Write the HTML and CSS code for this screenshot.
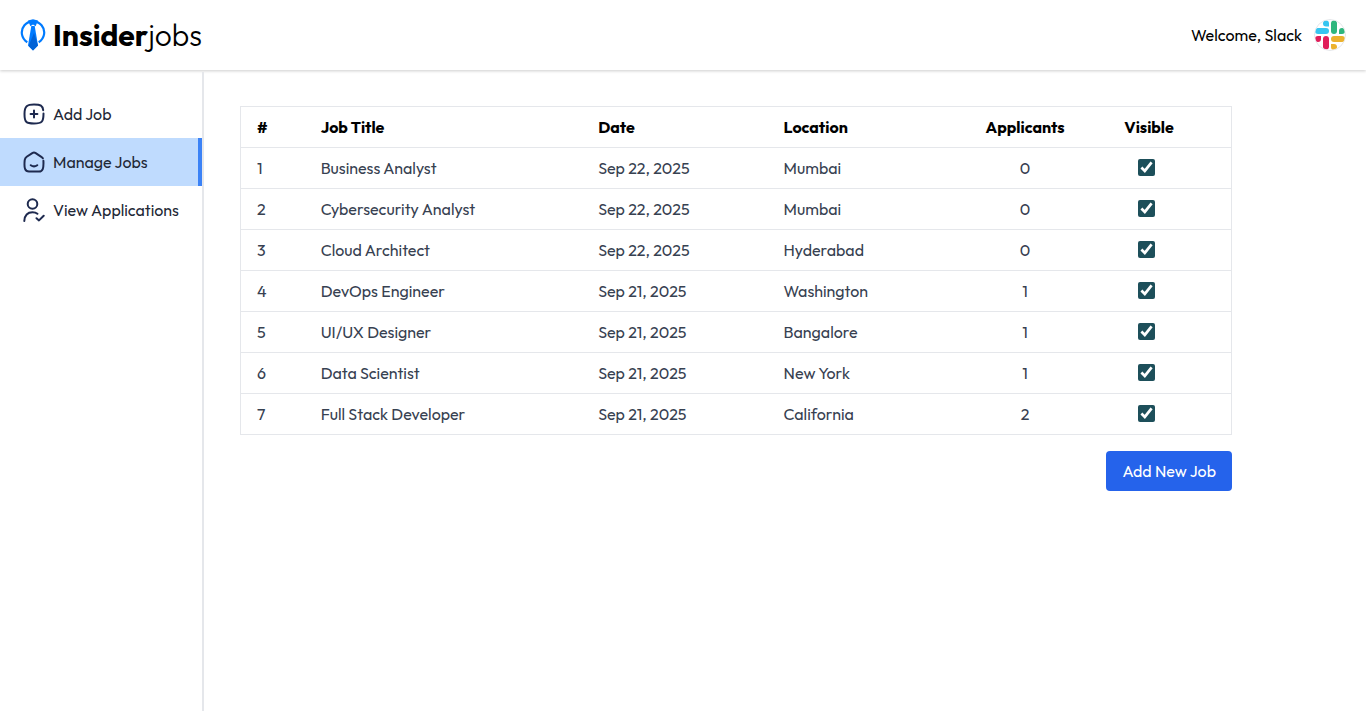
FILE: index.html
```html
<!DOCTYPE html>
<html lang="en">
<head>
<meta charset="utf-8">
<meta name="viewport" content="width=device-width, initial-scale=1">
<title>Insiderjobs - Manage Jobs</title>
<link rel="stylesheet" href="styles.css">
</head>
<body>
<header class="navbar">
  <a class="brand" href="#">
    <svg class="brand-mark" viewBox="0 0 26 32" aria-hidden="true">
      <path d="M7.3 23.2A11.2 11.2 0 1 1 18.7 23.2" fill="none" stroke="#007bff" stroke-width="2.2"/>
      <path d="M8 1.5L13 .3l5 1.2-2.4 5.8L13 5.6l-2.6 1.7z" fill="#007bff"/>
      <path d="M11.3 7h3.4L18 26.5 13 31.5 8 26.5z" fill="#007bff"/>
      <path d="M14 14l4 12.5-5 5-4.5-4.5z" fill="#0062d6"/>
    </svg>
    <span class="brand-name"><strong>Insider</strong><span class="brand-light">jobs</span></span>
  </a>
  <div class="account">
    <span>Welcome, Slack</span>
    <svg class="avatar" viewBox="0 0 32 32" role="img" aria-label="Slack">
      <defs><clipPath id="round"><circle cx="16" cy="16" r="15"/></clipPath></defs>
      <circle cx="16" cy="16" r="15.5" fill="#fff" stroke="#e5e7eb"/>
      <g clip-path="url(#round)">
        <path d="M12 1.5a3 3 0 0 1 3 3v3h-3a3 3 0 0 1 0-6z" fill="#36c5f0"/>
        <rect x="1" y="9" width="14" height="6" rx="3" fill="#36c5f0"/>
        <rect x="17" y="1.5" width="6" height="13.5" rx="3" fill="#2eb67d"/>
        <path d="M25 15v-3a3 3 0 1 1 3 3z" fill="#2eb67d"/>
        <rect x="17" y="17" width="14" height="6" rx="3" fill="#ecb22e"/>
        <path d="M17 25h3a3 3 0 1 1-3 3z" fill="#ecb22e"/>
        <rect x="9" y="17" width="6" height="13.5" rx="3" fill="#e01e5a"/>
        <path d="M7 17v3a3 3 0 1 1-3-3z" fill="#e01e5a"/>
      </g>
    </svg>
  </div>
</header>
<div class="layout">
  <nav class="sidebar">
    <a class="nav-item" href="#">
      <svg class="nav-icon" viewBox="0 0 22 22" aria-hidden="true"><path d="M20.2 7.2C19.7 2.6 17.8 1.5 11 1.5S1.5 3 1.5 11 3 20.5 11 20.5 20.5 19 20.5 10.4M11 7.6v6.8M7.6 11h6.8"/></svg>
      <span>Add Job</span>
    </a>
    <a class="nav-item active" href="#" aria-current="page">
      <svg class="nav-icon" viewBox="0 0 22 22" aria-hidden="true"><path d="M20.4 9.8c.4 7.7-.7 10.7-4.4 10.7H6c-4 0-5.1-3-4.3-11.4.2-1.7.7-2.4 2-3.3L9.300 2.100c1.200-.8 2.200-.8 3.400 0l5.600 3.700c.7.500 1.200.9 1.500 1.500M7.800 14.200c1.900 1.400 4.500 1.400 6.400 0"/></svg>
      <span>Manage Jobs</span>
    </a>
    <a class="nav-item" href="#">
      <svg class="nav-icon tall" viewBox="0 0 22 24" aria-hidden="true"><circle cx="9.500" cy="6" r="4.800"/><path d="M1.300 23c.4-5.600 3.500-8.700 8.200-8.700 2 0 3.700.5 4.900 1.500M13.500 20.200l2.500 2.200 4.700-4.700"/></svg>
      <span>View Applications</span>
    </a>
  </nav>
  <main class="content">
    <table class="jobs">
      <colgroup><col class="c-num"><col class="c-title"><col class="c-date"><col class="c-place"><col class="c-count"><col class="c-visible"></colgroup>
      <thead>
        <tr><th scope="col">#</th><th scope="col">Job Title</th><th scope="col">Date</th><th scope="col">Location</th><th scope="col" class="center">Applicants</th><th scope="col">Visible</th></tr>
      </thead>
      <tbody>
        <tr><td>1</td><td>Business Analyst</td><td>Sep 22, 2025</td><td>Mumbai</td><td class="center">0</td><td><input class="tick" type="checkbox" aria-label="Business Analyst visible" checked></td></tr>
        <tr><td>2</td><td>Cybersecurity Analyst</td><td>Sep 22, 2025</td><td>Mumbai</td><td class="center">0</td><td><input class="tick" type="checkbox" aria-label="Cybersecurity Analyst visible" checked></td></tr>
        <tr><td>3</td><td>Cloud Architect</td><td>Sep 22, 2025</td><td>Hyderabad</td><td class="center">0</td><td><input class="tick" type="checkbox" aria-label="Cloud Architect visible" checked></td></tr>
        <tr><td>4</td><td>DevOps Engineer</td><td>Sep 21, 2025</td><td>Washington</td><td class="center">1</td><td><input class="tick" type="checkbox" aria-label="DevOps Engineer visible" checked></td></tr>
        <tr><td>5</td><td>UI/UX Designer</td><td>Sep 21, 2025</td><td>Bangalore</td><td class="center">1</td><td><input class="tick" type="checkbox" aria-label="UI/UX Designer visible" checked></td></tr>
        <tr><td>6</td><td>Data Scientist</td><td>Sep 21, 2025</td><td>New York</td><td class="center">1</td><td><input class="tick" type="checkbox" aria-label="Data Scientist visible" checked></td></tr>
        <tr><td>7</td><td>Full Stack Developer</td><td>Sep 21, 2025</td><td>California</td><td class="center">2</td><td><input class="tick" type="checkbox" aria-label="Full Stack Developer visible" checked></td></tr>
      </tbody>
    </table>
    <div class="actions"><button class="add-job" type="button">Add New Job</button></div>
  </main>
</div>
</body>
</html>
```

FILE: styles.css
```css
* {
  box-sizing: border-box;
}

body {
  margin: 0;
  min-height: 100vh;
  display: flex;
  flex-direction: column;
  background: #fff;
  color: #000;
  font: 16px/24px Outfit, Lato, sans-serif;
}

a {
  color: inherit;
  text-decoration: none;
}

.navbar {
  display: flex;
  align-items: center;
  justify-content: space-between;
  padding: 19px 20px;
  box-shadow: 0 1px 3px rgba(0, 0, 0, 0.2);
}

.brand {
  display: flex;
  align-items: center;
  gap: 7px;
}

.brand-mark {
  width: 26px;
  height: 32px;
}

.brand-name {
  font-size: 30px;
  line-height: 32px;
}

.brand-name strong {
  font-weight: 700;
}

.brand-light {
  font-weight: 300;
}

.account {
  display: flex;
  align-items: center;
  gap: 12px;
}

.avatar {
  width: 32px;
  height: 32px;
}

.layout {
  flex: 1;
  display: flex;
  padding-top: 2px;
}

.sidebar {
  flex: none;
  width: 204px;
  padding-top: 18px;
  border-right: 2px solid #e5e7eb;
}

.nav-item {
  display: flex;
  align-items: center;
  gap: 8px;
  height: 48px;
  padding-left: 23px;
  color: #1f2937;
}

.nav-item.active {
  background: #bfdbfe;
  border-right: 4px solid #3b82f6;
}

.nav-icon {
  width: 22px;
  height: 22px;
  fill: none;
  stroke: #1e2a4f;
  stroke-width: 2;
  stroke-linecap: round;
  stroke-linejoin: round;
}

.nav-icon.tall {
  height: 24px;
}

.content {
  flex: 1;
  max-width: 1064px;
  padding: 34px 36px;
}

.jobs {
  width: 100%;
  table-layout: fixed;
  border-collapse: collapse;
  border: 1px solid #e5e7eb;
  color: #374151;
}

.c-num {
  width: 64px;
}

.c-title {
  width: 28%;
}

.c-date {
  width: 185px;
}

.c-place {
  width: 174px;
}

.c-count {
  width: 166px;
}

.c-visible {
  width: 123px;
}

.jobs th,
.jobs td {
  height: 41px;
  padding: 8px 16px;
  border-bottom: 1px solid #e5e7eb;
  text-align: left;
}

.jobs th {
  color: #000;
  font-weight: 700;
}

.jobs .center {
  text-align: center;
}

.tick {
  display: block;
  width: 17px;
  height: 17px;
  margin: 0 14px 2px;
  accent-color: #1d4f5a;
}

.actions {
  display: flex;
  justify-content: flex-end;
  margin-top: 16px;
}

.add-job {
  padding: 8px 16px;
  border: 0;
  border-radius: 4px;
  background: #2563eb;
  color: #fff;
  font: inherit;
}
```
